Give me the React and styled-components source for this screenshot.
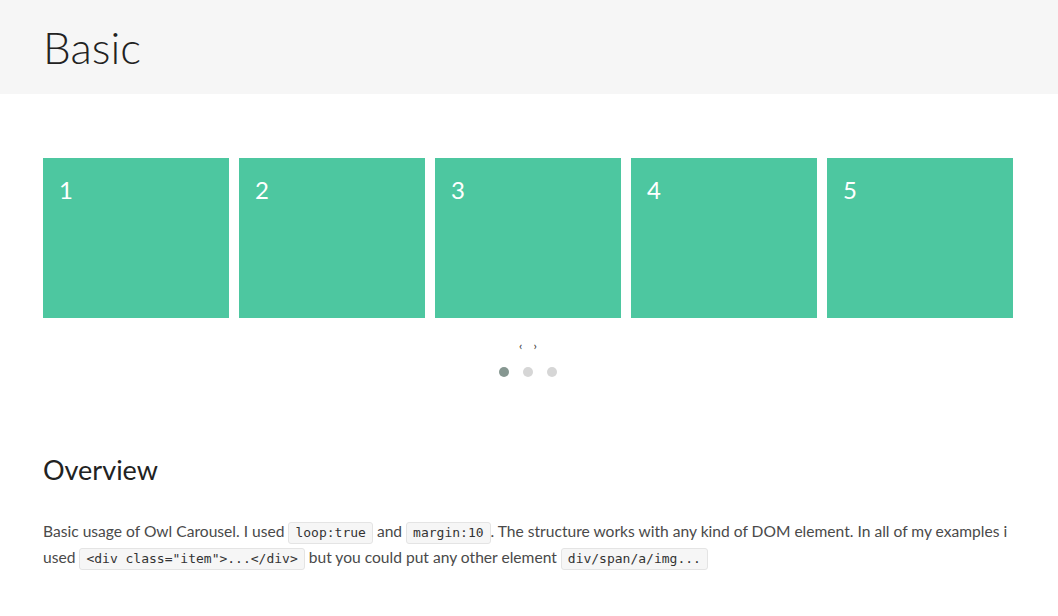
import React from 'react';
import styled, { createGlobalStyle } from 'styled-components';

const GlobalStyle = createGlobalStyle`
  body {
    margin: 0;
    background: #fff;
    font-family: Lato, "Liberation Sans", sans-serif;
    color: #333;
  }
`;

const Header = styled.header`
  background: #f6f6f6;
  height: 94px;
  display: flex;
  align-items: center;
  padding: 0 43px;
`;

const Title = styled.h1`
  margin: 0;
  font-weight: 300;
  font-size: 44px;
  color: #222;
  line-height: 1;
`;

const Page = styled.main`
  width: 970px;
  padding: 64px 43px 0;
`;

const Stage = styled.div`
  display: flex;
  gap: 10px;
`;

const Item = styled.div`
  width: 186px;
  height: 160px;
  background: #4dc7a0;
  color: #fff;
  font-size: 24px;
  padding: 20px 16px;
  box-sizing: border-box;
  line-height: 24px;
`;

const Nav = styled.div`
  display: flex;
  justify-content: center;
  gap: 11px;
  margin-top: 22px;
  font-size: 12px;
  color: #333;
  line-height: 12px;
`;

const NavBtn = styled.span`
  display: block;
`;

const Dots = styled.div`
  display: flex;
  justify-content: center;
  gap: 14px;
  margin-top: 15px;
`;

const Dot = styled.span`
  width: 10px;
  height: 10px;
  border-radius: 50%;
  background: ${({ $active }) => ($active ? '#869791' : '#d6d6d6')};
`;

const Heading = styled.h2`
  margin: 77px 0 0;
  font-weight: 400;
  font-size: 27px;
  color: #222;
  line-height: 32px;
`;

const Text = styled.p`
  margin: 32px 0 0;
  font-size: 15.6px;
  line-height: 26px;
  color: #4a4a4a;
`;

const Code = styled.code`
  display: inline-block;
  font-family: "DejaVu Sans Mono", monospace;
  font-size: 13px;
  line-height: 18px;
  color: #333;
  background: #f6f6f6;
  border: 1px solid #e4e4e4;
  border-radius: 3px;
  padding: 1px 6px;
`;

export default function App() {
  const items = [1, 2, 3, 4, 5];
  return (
    <>
      <GlobalStyle />
      <Header>
        <Title>Basic</Title>
      </Header>
      <Page>
        <Stage>
          {items.map((n) => (
            <Item key={n}>{n}</Item>
          ))}
        </Stage>
        <Nav>
          <NavBtn>‹</NavBtn>
          <NavBtn>›</NavBtn>
        </Nav>
        <Dots>
          <Dot $active />
          <Dot />
          <Dot />
        </Dots>
        <Heading>Overview</Heading>
        <Text>
          Basic usage of Owl Carousel. I used <Code>loop:true</Code> and{' '}
          <Code>margin:10</Code>. The structure works with any kind of DOM element. In all of my
          examples i used <Code>&lt;div class="item"&gt;...&lt;/div&gt;</Code> but you could put
          any other element <Code>div/span/a/img...</Code>
        </Text>
      </Page>
    </>
  );
}
